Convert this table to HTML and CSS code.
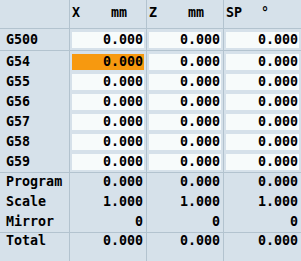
FILE: index.html
```html
<!DOCTYPE html>
<html>
<head>
<meta charset="utf-8">
<link rel="stylesheet" href="styles.css">
</head>
<body>
<div class="table">
  <div class="row head">
    <div class="lbl"></div>
    <div class="c"><span class="ax">X</span><span class="unit">mm</span></div>
    <div class="c"><span class="ax">Z</span><span class="unit">mm</span></div>
    <div class="c"><span class="ax">SP</span><span class="unit deg">°</span></div>
  </div>
  <div class="sec boxed">
    <div class="row"><div class="lbl">G500</div><div class="c"><div class="v">0.000</div></div><div class="c"><div class="v">0.000</div></div><div class="c"><div class="v">0.000</div></div></div>
  </div>
  <div class="sec boxed">
    <div class="row"><div class="lbl">G54</div><div class="c"><div class="v sel">0.000</div></div><div class="c"><div class="v">0.000</div></div><div class="c"><div class="v">0.000</div></div></div>
    <div class="row"><div class="lbl">G55</div><div class="c"><div class="v">0.000</div></div><div class="c"><div class="v">0.000</div></div><div class="c"><div class="v">0.000</div></div></div>
    <div class="row"><div class="lbl">G56</div><div class="c"><div class="v">0.000</div></div><div class="c"><div class="v">0.000</div></div><div class="c"><div class="v">0.000</div></div></div>
    <div class="row"><div class="lbl">G57</div><div class="c"><div class="v">0.000</div></div><div class="c"><div class="v">0.000</div></div><div class="c"><div class="v">0.000</div></div></div>
    <div class="row"><div class="lbl">G58</div><div class="c"><div class="v">0.000</div></div><div class="c"><div class="v">0.000</div></div><div class="c"><div class="v">0.000</div></div></div>
    <div class="row"><div class="lbl">G59</div><div class="c"><div class="v">0.000</div></div><div class="c"><div class="v">0.000</div></div><div class="c"><div class="v">0.000</div></div></div>
  </div>
  <div class="sec plain">
    <div class="row"><div class="lbl">Program</div><div class="c"><div class="v">0.000</div></div><div class="c"><div class="v">0.000</div></div><div class="c"><div class="v">0.000</div></div></div>
    <div class="row"><div class="lbl">Scale</div><div class="c"><div class="v">1.000</div></div><div class="c"><div class="v">1.000</div></div><div class="c"><div class="v">1.000</div></div></div>
    <div class="row"><div class="lbl">Mirror</div><div class="c"><div class="v">0</div></div><div class="c"><div class="v">0</div></div><div class="c"><div class="v">0</div></div></div>
  </div>
  <div class="sec total">
    <div class="row"><div class="lbl">Total</div><div class="c"><div class="v">0.000</div></div><div class="c"><div class="v">0.000</div></div><div class="c"><div class="v">0.000</div></div></div>
  </div>
</div>
</body>
</html>
```
FILE: styles.css
```css
html, body {
  margin: 0;
  padding: 0;
  background: #d6e1ea;
}
.table {
  width: 301px;
  height: 261px;
  overflow: hidden;
  display: flex;
  flex-direction: column;
  font-family: "DejaVu Sans Mono", monospace;
  font-weight: bold;
  font-size: 13.33px;
  line-height: 16px;
  color: #000;
  background: #d6e1ea;
}
.row {
  display: grid;
  grid-template-columns: 69px 77px 77px 78px;
}
.lbl {
  padding-left: 6px;
}
.c {
  border-left: 1px solid #b3c3cf;
  padding: 0 2px;
}
.v {
  height: 16px;
  text-align: right;
  padding-right: 1px;
}
.sec {
  border-top: 1px solid #b3c3cf;
}
.head {
  height: 28px;
}
.head .lbl, .head .c {
  padding-top: 5px;
}
.head .c {
  display: flex;
}
.unit {
  margin-left: 31px;
}
.deg {
  margin-left: 19px;
}
.boxed .row > div {
  padding-top: 2px;
  padding-bottom: 2px;
}
.boxed .row:first-child > div {
  padding-top: 3px;
}
.boxed .v {
  background: #f7fbfb;
}
.boxed .v.sel {
  background: #f7990f;
}
.plain .row {
  height: 20px;
}
.plain .row > div {
  padding-top: 1px;
}
.plain .row:last-child {
  height: 19px;
}
.total {
  flex: 1;
  display: flex;
  flex-direction: column;
}
.total .row {
  flex: 1;
}
```
